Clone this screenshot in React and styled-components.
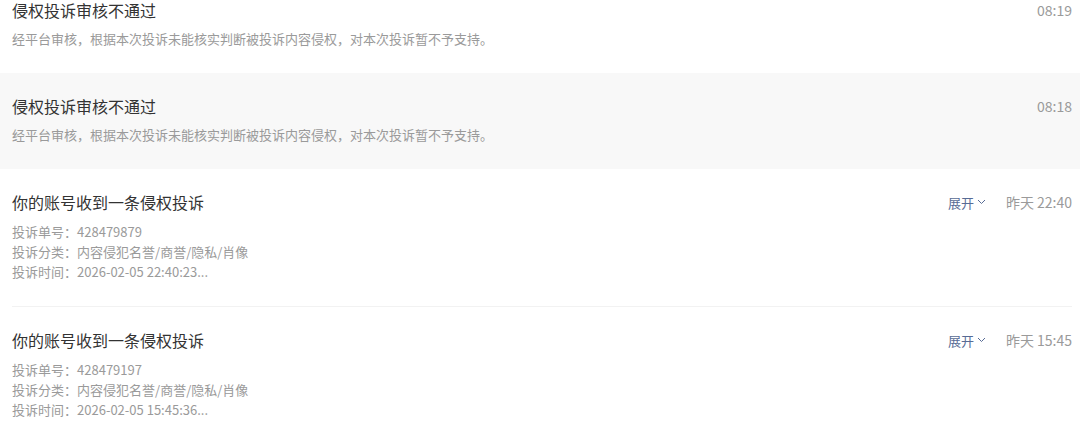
import styled, { createGlobalStyle } from 'styled-components'

const GlobalStyle = createGlobalStyle`
  html, body {
    margin: 0;
    padding: 0;
    background: #fff;
    overflow: hidden;
  }
  body {
    font-family: "Noto Sans CJK SC", "Noto Sans", sans-serif;
  }
`

const notices = [
  {
    id: 1,
    title: '侵权投诉审核不通过',
    desc: '经平台审核，根据本次投诉未能核实判断被投诉内容侵权，对本次投诉暂不予支持。',
    time: '08:19'
  },
  {
    id: 2,
    title: '侵权投诉审核不通过',
    desc: '经平台审核，根据本次投诉未能核实判断被投诉内容侵权，对本次投诉暂不予支持。',
    time: '08:18',
    active: true
  },
  {
    id: 3,
    title: '你的账号收到一条侵权投诉',
    details: [
      ['投诉单号', '428479879'],
      ['投诉分类', '内容侵犯名誉/商誉/隐私/肖像'],
      ['投诉时间', '2026-02-05 22:40:23...']
    ],
    time: '昨天 22:40',
    expandable: true,
    divider: true
  },
  {
    id: 4,
    title: '你的账号收到一条侵权投诉',
    details: [
      ['投诉单号', '428479197'],
      ['投诉分类', '内容侵犯名誉/商誉/隐私/肖像'],
      ['投诉时间', '2026-02-05 15:45:36...']
    ],
    time: '昨天 15:45',
    expandable: true
  }
]

const Chevron = () => (
  <svg width='9' height='6' viewBox='0 0 9 6' fill='none'>
    <path d='M1 1l3.5 3.5L8 1' stroke='#576b95' strokeWidth='1' />
  </svg>
)

const App = () => {
  return (
    <>
      <GlobalStyle />
      <List>
        {notices.map((n) => (
          <Item key={n.id} $active={n.active}>
            <Body>
              <Head>
                <Title>{n.title}</Title>
                <Meta>
                  {n.expandable && (
                    <Expand>
                      展开
                      <Chevron />
                    </Expand>
                  )}
                  <Time>{n.time}</Time>
                </Meta>
              </Head>
              {n.desc && <Desc>{n.desc}</Desc>}
              {n.details && (
                <Details>
                  {n.details.map(([k, v]) => (
                    <DetailLine key={k}>
                      {k}：{v}
                    </DetailLine>
                  ))}
                </Details>
              )}
            </Body>
            {n.divider && <Divider />}
          </Item>
        ))}
      </List>
    </>
  )
}
export default App

// the list is scrolled a little, so the first item is cut at the top
const List = styled.div`
  width: 1080px;
  margin-top: -23px;
`

const Item = styled.div`
  background: ${(p) => (p.$active ? '#f8f8f8' : '#fff')};
`

const Body = styled.div`
  padding: 22px 8px 24px 12px;
`

const Head = styled.div`
  display: flex;
  align-items: center;
  justify-content: space-between;
  height: 22px;
`

const Title = styled.div`
  font-size: 16px;
  line-height: 22px;
  color: #333;
`

const Meta = styled.div`
  display: flex;
  align-items: center;
  gap: 20px;
`

const Expand = styled.div`
  display: flex;
  align-items: center;
  gap: 3px;
  font-size: 13px;
  color: #576b95;
`

const Time = styled.div`
  font-size: 14px;
  color: #9a9a9a;
`

const Desc = styled.div`
  margin-top: 8px;
  font-size: 13px;
  line-height: 20px;
  color: #9a9a9a;
`

const Details = styled.div`
  margin-top: 9px;
`

const DetailLine = styled.div`
  font-size: 13px;
  line-height: 20px;
  color: #9a9a9a;
`

const Divider = styled.div`
  height: 1px;
  margin: 0 8px 0 12px;
  background: #f2f2f2;
`
